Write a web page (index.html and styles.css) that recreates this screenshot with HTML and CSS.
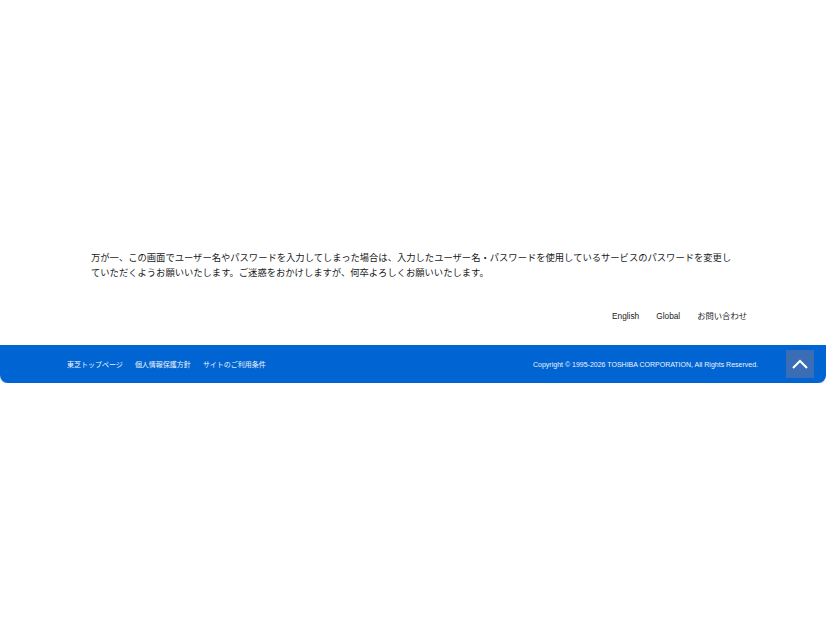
FILE: index.html
```html
<!DOCTYPE html>
<html lang="ja">
<head>
<meta charset="utf-8">
<link rel="stylesheet" href="styles.css">
</head>
<body>
<main class="main">
  <p class="notice">万が一、この画面でユーザー名やパスワードを入力してしまった場合は、入力したユーザー名・パスワードを使用しているサービスのパスワードを変更していただくようお願いいたします。ご迷惑をおかけしますが、何卒よろしくお願いいたします。</p>
  <nav class="sublinks">
    <a>English</a>
    <a>Global</a>
    <a>お問い合わせ</a>
  </nav>
</main>
<footer class="footer">
  <nav class="footlinks">
    <a>東芝トップページ</a>
    <a>個人情報保護方針</a>
    <a>サイトのご利用条件</a>
  </nav>
  <div class="copy">Copyright © 1995-2026 TOSHIBA CORPORATION, All Rights Reserved.</div>
  <a class="totop"><svg width="16" height="10" viewBox="0 0 16 10"><path d="M1 9 L8 2 L15 9" fill="none" stroke="#fff" stroke-width="2"/></svg></a>
</footer>
</body>
</html>
```
FILE: styles.css
```css
html, body { margin: 0; padding: 0; background: #fff; }
body { font-family: "Liberation Sans", "Noto Sans CJK JP", sans-serif; color: #222; }
.main { padding: 251px 0 0 91px; }
.notice { margin: 0; width: 648px; font-size: 9.3px; line-height: 14.5px; color: #1a1a1a; }
.sublinks { display: flex; gap: 17px; justify-content: flex-end; width: 656px; margin-top: 30px; height: 12px; line-height: 12px; font-size: 8.3px; padding-bottom: 23px; }
.sublinks a { color: #1a1a1a; }
.footer { height: 38px; background: #0064d2; border-radius: 0 0 8px 8px; box-shadow: 0 1px 2px rgba(80,120,170,0.35); display: flex; align-items: center; padding: 0 12px 0 67px; }
.footlinks { display: flex; gap: 12px; font-size: 7px; color: #fff; }
.footlinks a { color: #eef4fb; }
.copy { margin-left: auto; font-size: 7px; color: #eef4fb; margin-right: 28px; }
.totop { width: 28px; height: 28px; background: #3a6db5; display: flex; align-items: center; justify-content: center; }
```
